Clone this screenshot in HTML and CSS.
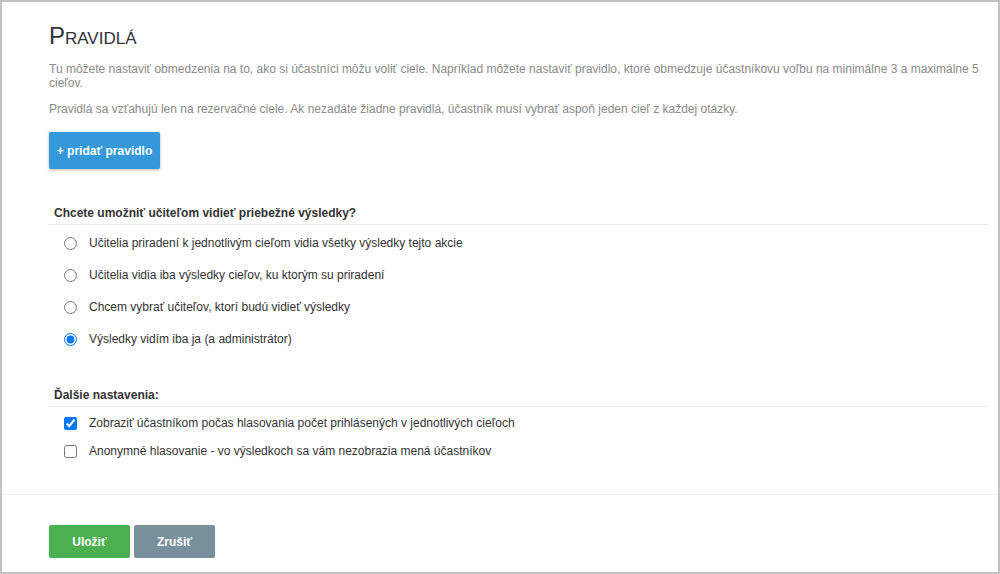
FILE: index.html
```html
<!DOCTYPE html>
<html lang="sk">
<head>
<meta charset="utf-8">
<title>Pravidlá</title>
<link rel="stylesheet" href="styles.css">
</head>
<body>
<div class="frame">
  <div class="main">
    <h1 class="title">Pravidlá</h1>
    <p class="note">Tu môžete nastaviť obmedzenia na to, ako si účastníci môžu voliť ciele. Napríklad môžete nastaviť pravidlo, ktoré obmedzuje účastníkovu voľbu na minimálne 3 a maximálne 5 cieľov.</p>
    <p class="note note-second">Pravidlá sa vzťahujú len na rezervačné ciele. Ak nezadáte žiadne pravidlá, účastník musí vybrať aspoň jeden cieľ z každej otázky.</p>
    <button class="btn btn-add" type="button">+ pridať pravidlo</button>

    <h2 class="section-title section-first">Chcete umožniť učiteľom vidieť priebežné výsledky?</h2>
    <div class="options radios">
      <label class="option"><input type="radio" name="vis">Učitelia priradení k jednotlivým cieľom vidia všetky výsledky tejto akcie</label>
      <label class="option"><input type="radio" name="vis">Učitelia vidia iba výsledky cieľov, ku ktorým su priradení</label>
      <label class="option"><input type="radio" name="vis">Chcem vybrať učiteľov, ktorí budú vidieť výsledky</label>
      <label class="option"><input type="radio" name="vis" checked>Výsledky vidím iba ja (a administrátor)</label>
    </div>

    <h2 class="section-title section-second">Ďalšie nastavenia:</h2>
    <div class="options checks">
      <label class="option"><input type="checkbox" checked>Zobraziť účastníkom počas hlasovania počet prihlásených v jednotlivých cieľoch</label>
      <label class="option"><input type="checkbox">Anonymné hlasovanie - vo výsledkoch sa vám nezobrazia mená účastníkov</label>
    </div>
  </div>
  <div class="footer">
    <button class="btn btn-save" type="button">Uložiť</button>
    <button class="btn btn-cancel" type="button">Zrušiť</button>
  </div>
</div>
</body>
</html>
```

FILE: styles.css
```css
* {
  box-sizing: border-box;
}

html, body {
  margin: 0;
  padding: 0;
  background: #ffffff;
}

body {
  font-family: "Liberation Sans", Arial, sans-serif;
  font-size: 12px;
  color: #333333;
}

.frame {
  width: 1000px;
  height: 574px;
  border: 2px solid #c3c3c3;
  display: flex;
  flex-direction: column;
  background: #ffffff;
}

.main {
  padding: 20px 10px 29px 47px;
  display: flex;
  flex-direction: column;
  align-items: flex-start;
}

.title {
  margin: 0;
  font-size: 24px;
  line-height: 28px;
  font-weight: normal;
  font-variant: small-caps;
  color: #2f3338;
}

.note {
  margin: 12px 0 0;
  font-size: 12px;
  line-height: 14px;
  color: #8a8a8a;
}

.btn {
  font-family: "Liberation Sans", Arial, sans-serif;
  font-size: 12px;
  font-weight: bold;
  color: #ffffff;
  border: none;
  border-radius: 2px;
  cursor: pointer;
  padding: 0;
}

.btn-add {
  margin-top: 16px;
  width: 111px;
  height: 37px;
  background: #3498db;
  box-shadow: 0 1px 3px rgba(0, 0, 0, 0.3);
}

.section-title {
  align-self: stretch;
  margin: 0 0 0 -1px;
  padding: 0 6px 3px;
  font-size: 12px;
  line-height: 16px;
  font-weight: bold;
  color: #333333;
  border-bottom: 1px solid #eaeaea;
}

.section-first {
  margin-top: 36px;
}

.section-second {
  margin-top: 32px;
}

.options {
  display: flex;
  flex-direction: column;
  margin-top: 2px;
}

.option {
  display: flex;
  align-items: center;
  font-size: 12px;
  line-height: 14px;
  color: #333333;
}

.radios .option {
  height: 32px;
}

.checks .option {
  height: 28px;
}

.option input {
  width: 13px;
  height: 13px;
  margin: 0 12px 0 15px;
  flex: none;
}

.footer {
  flex: 1;
  border-top: 1px solid #f3f3f3;
  background: #ffffff;
  padding: 30px 0 0 47px;
  display: flex;
  align-items: flex-start;
  gap: 4px;
}

.btn-save,
.btn-cancel {
  width: 81px;
  height: 33px;
}

.btn-save {
  background: #4caf50;
}

.btn-cancel {
  background: #78909c;
}
```
